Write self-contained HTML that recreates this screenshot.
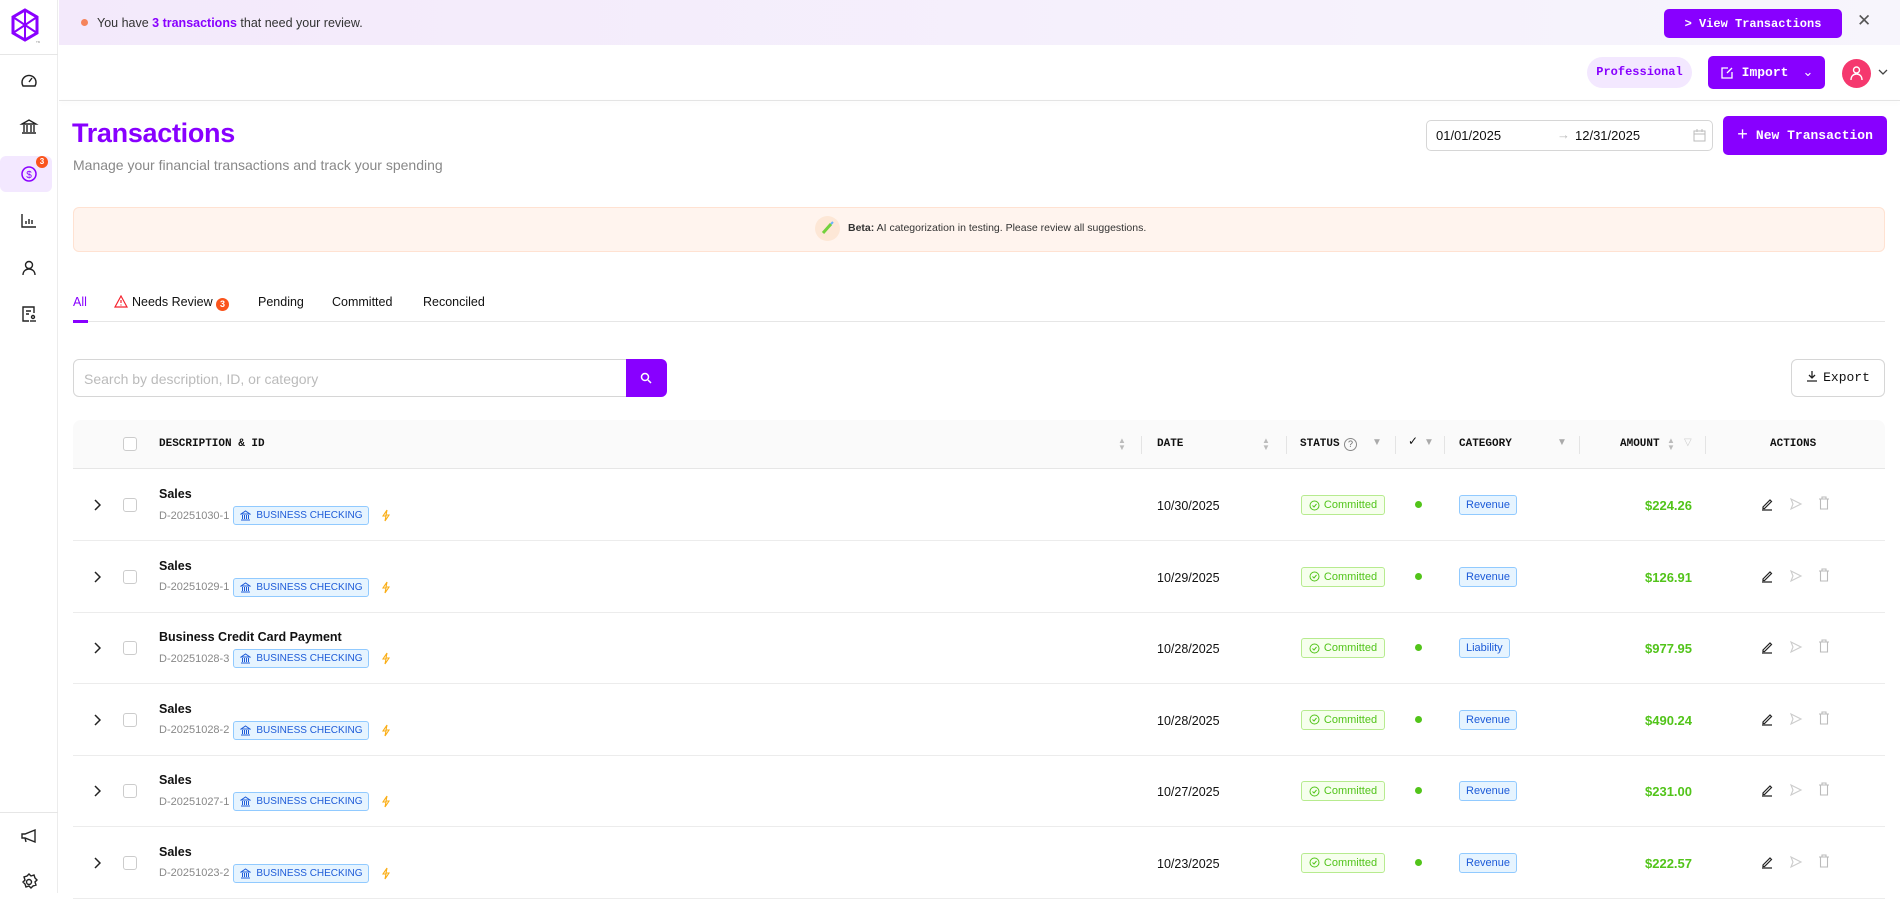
<!DOCTYPE html>
<html><head><meta charset="utf-8"><style>
*{box-sizing:border-box;margin:0;padding:0}
body{width:1900px;height:893px;overflow:hidden;background:#fff;font-family:"Liberation Sans",sans-serif;color:#111;position:relative}
.a{position:absolute}
.mono{font-family:"Liberation Mono",monospace}
.sb{left:0;top:0;width:58px;height:893px;border-right:1px solid #ececec;background:#fff}
.ico{position:absolute;left:19px;width:20px;height:20px}
.btn{background:#8800ff;color:#fff;border-radius:5px;display:flex;align-items:center;justify-content:center;font-family:"Liberation Mono",monospace;font-weight:bold}
.th{top:420px;height:49px;font-family:"Liberation Mono",monospace;font-weight:bold;font-size:11px;line-height:49px;color:#111}
.dv{top:436px;width:1px;height:18px;background:#e4e4e4}
.cb{width:14px;height:14px;border:1px solid #ccc;border-radius:3px;background:#fff}
.row .t{font-weight:bold;font-size:12.5px}
.id{font-size:11px;color:#888}
.bc{display:inline-flex;align-items:center;gap:5px;height:19px;padding:0 6px;border:1px solid #91caff;background:#e6f4ff;color:#1d5bd8;font-size:10px;border-radius:3px}
.cm{height:20px;width:84px;border:1px solid #b7eb8f;background:#f6ffed;color:#52c41a;font-size:11px;border-radius:3px;display:flex;align-items:center;justify-content:center;gap:4px}
.cat{height:20px;padding:0 6px;border:1px solid #91caff;background:#e6f4ff;color:#1d5bd8;font-size:11px;border-radius:3px;display:flex;align-items:center}
.amt{color:#52c41a;font-weight:bold;font-size:13px;text-align:right;width:120px}
.line{left:73px;width:1812px;height:1px;background:#ececec}
.tab{top:295px;font-size:12.5px}
</style></head><body>

<div class="a sb"></div>
<svg class="a" style="left:10px;top:8px" width="30" height="36" viewBox="0 0 30 36"><path d="M15 2 L27 9 L27 25 L15 32 L3 25 L3 9 Z" fill="none" stroke="#8a00ff" stroke-width="3"/><path d="M15 2 V32 M3 9 L27 25 M27 9 L3 25" stroke="#8a00ff" stroke-width="2"/><text x="26" y="35" font-size="3" fill="#888">TM</text></svg>
<div class="a" style="left:0;top:54px;width:58px;height:1px;background:#e6e6e6"></div>
<svg class="ico" style="top:71px" viewBox="0 0 20 20" fill="none" stroke="#222" stroke-width="1.4"><path d="M4 15a7 7 0 1 1 12 0z"/><path d="M10 11l3-4"/></svg>
<svg class="ico" style="top:117px" viewBox="0 0 20 20" fill="none" stroke="#222" stroke-width="1.4"><path d="M3 7l7-4 7 4zM5 8v7M8 8v7M12 8v7M15 8v7M3 16h14"/></svg>
<div class="a" style="left:0;top:156px;width:52px;height:36px;background:#f3e8ff;border-radius:6px"></div>
<svg class="ico" style="top:164px" viewBox="0 0 20 20" fill="none" stroke="#8a00ff" stroke-width="1.5"><circle cx="10" cy="10" r="7"/><text x="10" y="14" font-size="10" text-anchor="middle" fill="#8a00ff" stroke="none" font-family="Liberation Sans">$</text></svg>
<div class="a" style="left:36px;top:156px;width:12px;height:12px;border-radius:6px;background:#fa541c;color:#fff;font-size:8px;font-weight:bold;text-align:center;line-height:12px">3</div>
<svg class="ico" style="top:211px" viewBox="0 0 20 20" fill="none" stroke="#222" stroke-width="1.4"><path d="M3 3v13h14M7 13v-3M10 13V8M13 13v-4"/></svg>
<svg class="ico" style="top:258px" viewBox="0 0 20 20" fill="none" stroke="#222" stroke-width="1.4"><circle cx="10" cy="7" r="3.5"/><path d="M4 17c0-4 3-6 6-6s6 2 6 6"/></svg>
<svg class="ico" style="top:304px" viewBox="0 0 20 20" fill="none" stroke="#222" stroke-width="1.4"><path d="M15 9V3H4v14h6M7 7h5M7 10h3"/><circle cx="14" cy="13" r="1.5"/><path d="M11 17h6"/></svg>
<div class="a" style="left:0;top:812px;width:58px;height:1px;background:#e6e6e6"></div>
<svg class="ico" style="top:826px" viewBox="0 0 20 20" fill="none" stroke="#222" stroke-width="1.4"><path d="M3 8h3l10-4v12L6 12H3zM6 12l1 4"/></svg>
<svg class="ico" style="top:872px" viewBox="0 0 20 20" fill="none" stroke="#222" stroke-width="1.4"><circle cx="10" cy="10" r="2.5"/><path d="M10 2l2 2 3-1 1 3 2 2-2 2 1 3-3 1-2 2-2-2-3 1-1-3-2-2 2-2-1-3 3-1z"/></svg>

<div class="a" style="left:59px;top:0;width:1841px;height:45px;background:linear-gradient(90deg,#f3e9fb,#f7f5fc)"></div>
<div class="a" style="left:81px;top:19px;width:7px;height:7px;border-radius:4px;background:#f5845b"></div>
<div class="a" style="left:97px;top:16px;font-size:12.5px;color:#333">You have <b style="color:#8800ff">3 transactions</b> that need your review.</div>
<div class="a btn" style="left:1664px;top:9px;width:178px;height:29px;font-size:12px">&gt; View Transactions</div>
<div class="a" style="left:1857px;top:11px;font-size:17px;color:#555">✕</div>

<div class="a" style="left:59px;top:100px;width:1841px;height:1px;background:#e4e4e4;box-shadow:0 2px 4px rgba(0,0,0,.05)"></div>
<div class="a mono" style="left:1587px;top:57px;width:105px;height:31px;border-radius:16px;background:#f3e8ff;color:#8800ff;font-weight:bold;font-size:12px;line-height:31px;text-align:center">Professional</div>
<div class="a btn" style="left:1708px;top:56px;width:117px;height:33px;font-size:13px;gap:8px">
<svg width="14" height="14" viewBox="0 0 14 14" fill="none" stroke="#fff" stroke-width="1.3"><path d="M8 2H2v10h10V6M7 7l5-5"/></svg>Import <span style="font-weight:normal;margin-left:6px">⌄</span></div>
<div class="a" style="left:1842px;top:59px;width:29px;height:29px;border-radius:50%;background:#f5386e"></div>
<svg class="a" style="left:1849px;top:65px" width="15" height="16" viewBox="0 0 15 16" fill="none" stroke="#fff" stroke-width="1.4"><circle cx="7.5" cy="5" r="3"/><path d="M2 15c0-4 2.5-6 5.5-6s5.5 2 5.5 6"/></svg>
<svg class="a" style="left:1878px;top:68px" width="10" height="8" viewBox="0 0 10 8" fill="none" stroke="#444" stroke-width="1.3"><path d="M1 2l4 4 4-4"/></svg>

<div class="a" style="left:72px;top:118px;font-size:27px;color:#8800ff;font-weight:bold;letter-spacing:-.3px">Transactions</div>
<div class="a" style="left:73px;top:157px;font-size:14px;color:#888">Manage your financial transactions and track your spending</div>
<div class="a" style="left:1426px;top:120px;width:287px;height:31px;border:1px solid #d6d6d6;border-radius:5px;font-size:13px;color:#111">
<span class="a" style="left:9px;top:7px">01/01/2025</span><span class="a" style="left:130px;top:6px;color:#bbb">→</span><span class="a" style="left:148px;top:7px">12/31/2025</span>
<svg class="a" style="left:266px;top:8px" width="13" height="13" viewBox="0 0 13 13" fill="none" stroke="#bbb" stroke-width="1"><rect x="1" y="2" width="11" height="10"/><path d="M1 5h11M4 0v3M9 0v3"/></svg></div>
<div class="a btn" style="left:1723px;top:116px;width:164px;height:39px;font-size:13px;gap:8px"><span style="font-size:18px;font-weight:normal">+</span>New Transaction</div>

<div class="a" style="left:73px;top:207px;width:1812px;height:45px;background:#fff4ee;border:1px solid #ffe2d2;border-radius:6px"></div>
<div class="a" style="left:815px;top:216px;width:25px;height:25px;border-radius:50%;background:#fde7d6"></div>
<svg class="a" style="left:820px;top:220px" width="16" height="16" viewBox="0 0 16 16"><path d="M3 13l8-9" stroke="#73d13d" stroke-width="3"/><path d="M11 4l2-2" stroke="#69b1ff" stroke-width="2"/></svg>
<div class="a" style="left:848px;top:222px;font-size:10.5px;color:#333"><b>Beta:</b> AI categorization in testing. Please review all suggestions.</div>

<div class="a tab" style="left:73px;color:#8800ff">All</div>
<svg class="a" style="left:114px;top:295px" width="14" height="13" viewBox="0 0 14 13" fill="none" stroke="#f5222d" stroke-width="1.2"><path d="M7 1L13 12H1z"/><path d="M7 5v3M7 9.5v1"/></svg>
<div class="a tab" style="left:132px">Needs Review</div>
<div class="a" style="left:216px;top:298px;width:13px;height:13px;border-radius:50%;background:#fa541c;color:#fff;font-size:9px;font-weight:bold;text-align:center;line-height:13px">3</div>
<div class="a tab" style="left:258px">Pending</div>
<div class="a tab" style="left:332px">Committed</div>
<div class="a tab" style="left:423px">Reconciled</div>
<div class="a" style="left:73px;top:321px;width:1812px;height:1px;background:#e6e6e6"></div>
<div class="a" style="left:73px;top:320px;width:15px;height:3px;background:#8800ff"></div>

<div class="a" style="left:73px;top:359px;width:556px;height:38px;border:1px solid #d6d6d6;border-radius:6px 0 0 6px"></div>
<div class="a" style="left:84px;top:371px;font-size:14px;color:#bbb">Search by description, ID, or category</div>
<div class="a" style="left:626px;top:359px;width:41px;height:38px;background:#8800ff;border-radius:0 6px 6px 0"></div>
<svg class="a" style="left:640px;top:372px" width="12" height="12" viewBox="0 0 12 12" fill="none" stroke="#fff" stroke-width="1.5"><circle cx="5" cy="5" r="3.5"/><path d="M8 8l3 3"/></svg>
<div class="a" style="left:1791px;top:359px;width:94px;height:38px;border:1px solid #d6d6d6;border-radius:6px;font-family:'Liberation Mono',monospace;font-size:13px;line-height:36px;text-align:center">
<svg width="12" height="12" viewBox="0 0 12 12" fill="none" stroke="#222" stroke-width="1.3" style="vertical-align:-1px;margin-right:5px"><path d="M6 1v7M3 5l3 3 3-3M1 11h10"/></svg>Export</div>

<div class="a" style="left:73px;top:420px;width:1812px;height:49px;background:#fafafa;border-radius:8px 8px 0 0;border-bottom:1px solid #e6e6e6"></div>
<div class="a cb" style="left:123px;top:437px"></div>
<div class="a th" style="left:159px">DESCRIPTION &amp; ID</div>
<div class="a" style="left:1118px;top:437px;font-size:8px;line-height:7px;color:#bbb">▲<br>▼</div>
<div class="a dv" style="left:1141px"></div>
<div class="a th" style="left:1157px">DATE</div>
<div class="a" style="left:1262px;top:437px;font-size:8px;line-height:7px;color:#bbb">▲<br>▼</div>
<div class="a dv" style="left:1286px"></div>
<div class="a th" style="left:1300px">STATUS</div>
<div class="a" style="left:1344px;top:438px;width:13px;height:13px;border:1px solid #888;border-radius:50%;font-size:9px;text-align:center;line-height:11px;color:#666">?</div>
<div class="a" style="left:1372px;top:437px;font-size:10px;color:#aaa">▼</div>
<div class="a dv" style="left:1395px"></div>
<div class="a" style="left:1408px;top:434px;font-size:12px">✓</div>
<div class="a" style="left:1424px;top:437px;font-size:10px;color:#aaa">▼</div>
<div class="a dv" style="left:1444px"></div>
<div class="a th" style="left:1459px">CATEGORY</div>
<div class="a" style="left:1557px;top:437px;font-size:10px;color:#aaa">▼</div>
<div class="a dv" style="left:1579px"></div>
<div class="a th" style="left:1620px">AMOUNT</div>
<div class="a" style="left:1667px;top:437px;font-size:8px;line-height:7px;color:#bbb">▲<br>▼</div>
<div class="a" style="left:1684px;top:437px;font-size:10px;color:#ccc">▽</div>
<div class="a dv" style="left:1705px"></div>
<div class="a th" style="left:1770px">ACTIONS</div>

<div id="rows"></div>
<script>
var d=[["Sales","D-20251030-1","10/30/2025","Revenue","$224.26"],["Sales","D-20251029-1","10/29/2025","Revenue","$126.91"],["Business Credit Card Payment","D-20251028-3","10/28/2025","Liability","$977.95"],["Sales","D-20251028-2","10/28/2025","Revenue","$490.24"],["Sales","D-20251027-1","10/27/2025","Revenue","$231.00"],["Sales","D-20251023-2","10/23/2025","Revenue","$222.57"]];
var h="";
d.forEach(function(r,i){var y=469+i*71.5;
h+='<div class="a row" style="left:0;top:'+y+'px;width:1900px;height:72px">'+
'<svg class="a" style="left:93px;top:30px" width="8" height="12" viewBox="0 0 8 12" fill="none" stroke="#222" stroke-width="1.5"><path d="M2 1l5 5-5 5"/></svg>'+
'<div class="a cb" style="left:123px;top:29px"></div>'+
'<div class="a t" style="left:159px;top:18px">'+r[0]+'</div>'+
'<div class="a" style="left:159px;top:37px;display:flex;align-items:center;gap:4px"><span class="id">'+r[1]+'</span><span class="bc"><svg width="11" height="11" viewBox="0 0 11 11" fill="none" stroke="#1d5bd8" stroke-width="1"><path d="M1 4l4.5-3 4.5 3zM2.5 5v4M4.5 5v4M6.5 5v4M8.5 5v4M1 10h9"/></svg>BUSINESS CHECKING</span><svg style="margin-left:8px" width="10" height="13" viewBox="0 0 10 13" fill="none" stroke="#faad14" stroke-width="1.1"><path d="M6 1L2 7h3l-1 5 4-6H5z"/></svg></div>'+
'<div class="a" style="left:1157px;top:30px;font-size:12.5px">'+r[2]+'</div>'+
'<div class="a cm" style="left:1301px;top:26px"><svg width="11" height="11" viewBox="0 0 11 11" fill="none" stroke="#52c41a" stroke-width="1"><circle cx="5.5" cy="5.5" r="4.5"/><path d="M3.5 5.5l1.5 1.5 2.5-3"/></svg>Committed</div>'+
'<div class="a" style="left:1415px;top:32px;width:7px;height:7px;border-radius:50%;background:#52c41a"></div>'+
'<div class="a cat" style="left:1459px;top:26px">'+r[3]+'</div>'+
'<div class="a amt" style="left:1572px;top:29px">'+r[4]+'</div>'+
'<svg class="a" style="left:1760px;top:28px" width="14" height="14" viewBox="0 0 14 14" fill="none" stroke="#222" stroke-width="1.2"><path d="M3 10l7-7 1.5 1.5-7 7H3zM2 13h10"/></svg>'+
'<svg class="a" style="left:1789px;top:28px" width="14" height="14" viewBox="0 0 14 14" fill="none" stroke="#ccc" stroke-width="1.1"><path d="M2 2l10 5-10 5 2-5z"/></svg>'+
'<svg class="a" style="left:1818px;top:27px" width="12" height="14" viewBox="0 0 12 14" fill="none" stroke="#bbb" stroke-width="1.1"><path d="M1 3h10M4 3V1h4v2M2.5 3v10h7V3"/></svg>'+
'</div><div class="a line" style="top:'+(y+71)+'px"></div>';});
document.getElementById("rows").innerHTML=h;
</script>
</body></html>
